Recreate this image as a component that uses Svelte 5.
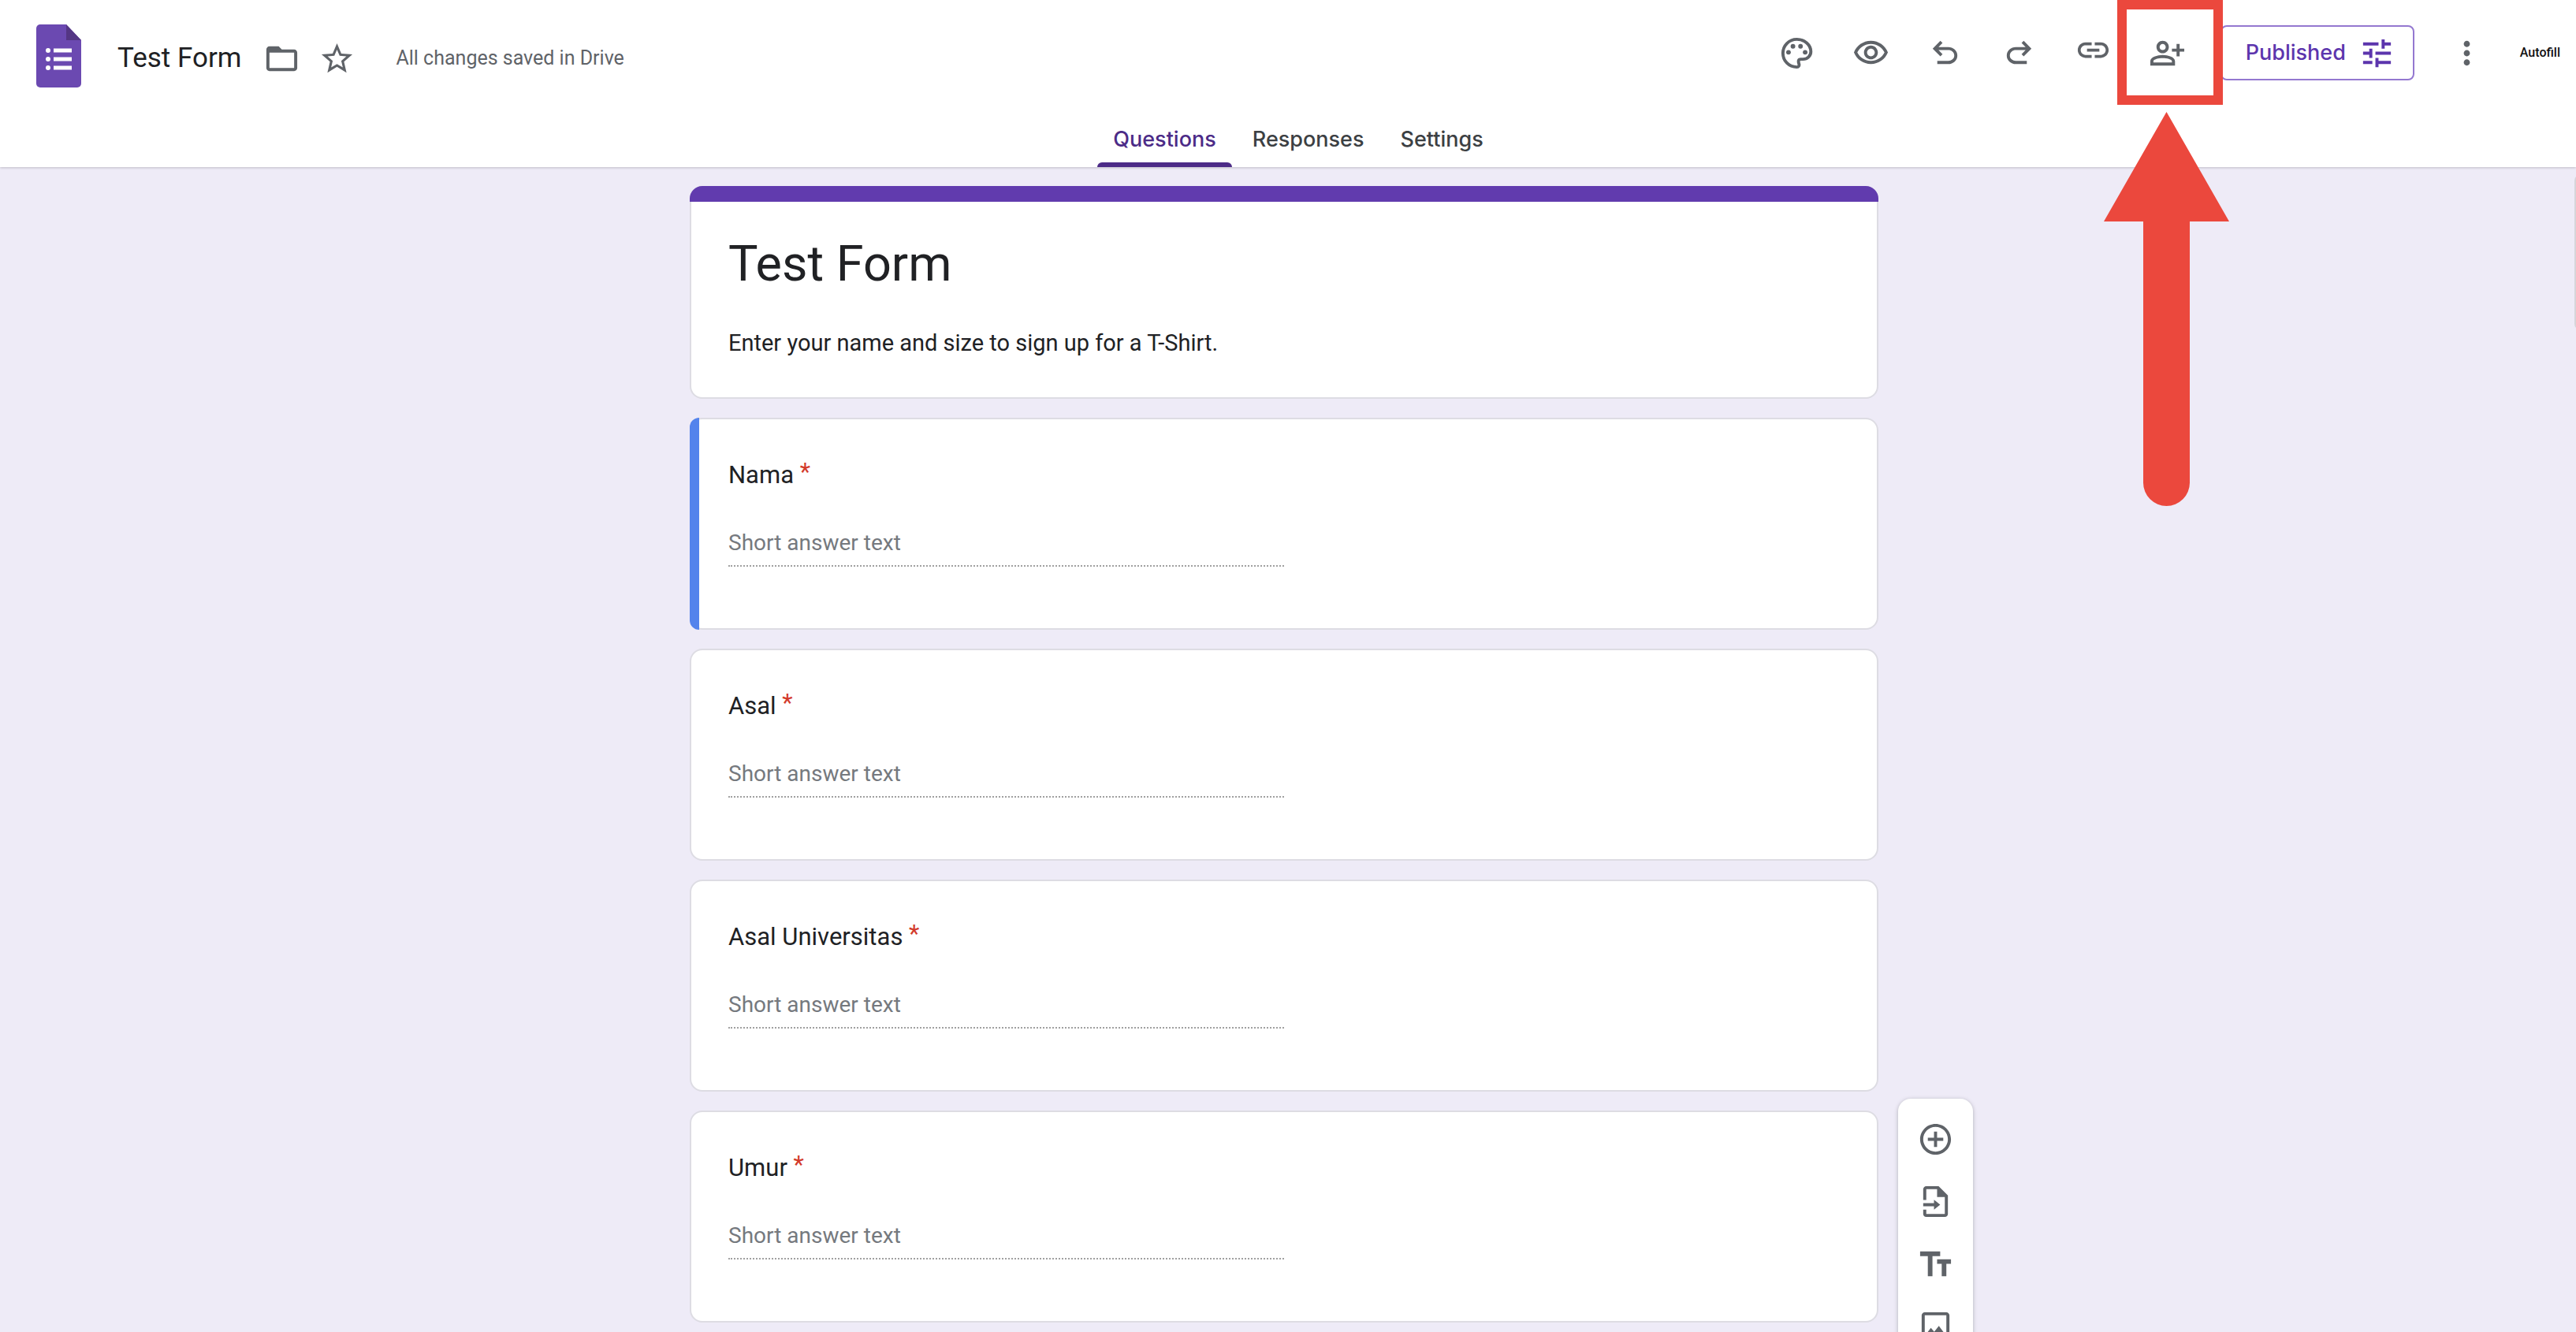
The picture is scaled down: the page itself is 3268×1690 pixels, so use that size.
<script>
  const questions = [
    { id: 'nama', label: 'Nama' },
    { id: 'asal', label: 'Asal' },
    { id: 'universitas', label: 'Asal Universitas' },
    { id: 'umur', label: 'Umur' }
  ];
  const tabs = ['Questions', 'Responses', 'Settings'];
  let current = $state('Questions');
  let selected = $state('nama');

  const undoPath =
    'M7 19v-2h7.100c1.050 0 1.960-.33 2.740-1 .77-.67 1.160-1.500 1.160-2.500s-.39-1.830-1.160-2.500c-.78-.67-1.690-1-2.740-1H7.800l2.600 2.600L9 14 4 9l5-5 1.400 1.400L7.800 8h6.300c1.620 0 3 .53 4.160 1.580C19.420 10.630 20 11.930 20 13.500s-.58 2.880-1.740 3.930C17.100 18.480 15.720 19 14.100 19H7z';

  const tools = [
    {
      label: 'Add question',
      d: 'M13 7h-2v4H7v2h4v4h2v-4h4v-2h-4V7zm-1-5C6.480 2 2 6.480 2 12s4.480 10 10 10 10-4.480 10-10S17.520 2 12 2zm0 18c-4.410 0-8-3.590-8-8s3.590-8 8-8 8 3.590 8 8-3.590 8-8 8z'
    },
    {
      label: 'Import questions',
      d: 'M14 2H6c-1.100 0-2 .9-2 2v7h2V4h7v5h5v11H6v-2.800H4V20c0 1.100.9 2 2 2h12c1.100 0 2-.9 2-2V8l-6-6zM4 13v2h7v2.200l4-3.200-4-3.200V13H4z'
    },
    { label: 'Add title and description', d: 'M2 4v3h5v13h3V7h5V4H2zm20 5h-9v3h3v8h3v-8h3V9z' },
    {
      label: 'Add image',
      d: 'M19 5v14H5V5h14m0-2H5c-1.100 0-2 .9-2 2v14c0 1.100.9 2 2 2h14c1.100 0 2-.9 2-2V5c0-1.100-.9-2-2-2zm-4.860 8.860l-3 3.870L9 13.140 6 17h12l-3.860-5.140z'
    }
  ];
</script>

<div class="page">
  <header class="top">
    <div class="bar">
      <div class="doc">
        <a class="logo" href="#home" aria-label="Forms home">
          <svg viewBox="0 0 57 80">
            <path fill="#6b49b1" d="M5 0h33l19 20v55a5 5 0 0 1-5 5H5a5 5 0 0 1-5-5V5a5 5 0 0 1 5-5z" />
            <path fill="#543684" d="M38 0l19 20H38z" />
            <g fill="#fff">
              <circle cx="15" cy="33" r="3" /><circle cx="15" cy="44" r="3" /><circle cx="15" cy="55" r="3" />
              <path d="M22 30.500h23v5H22zM22 41.500h23v5H22zM22 52.500h23v5H22z" />
            </g>
          </svg>
        </a>
        <h1>Test Form</h1>
        <button class="icon small" aria-label="Move to folder">
          <svg viewBox="0 0 24 24"><path d="M20 6h-8l-2-2H4c-1.100 0-1.990.9-1.990 2L2 18c0 1.100.9 2 2 2h16c1.100 0 2-.9 2-2V8c0-1.100-.9-2-2-2zm0 12H4V8h16v10z" /></svg>
        </button>
        <button class="icon small" aria-label="Star">
          <svg viewBox="0 0 24 24"><path d="M22 9.240l-7.190-.62L12 2 9.190 8.630 2 9.240l5.460 4.730L5.820 21 12 17.270 18.180 21l-1.630-7.030L22 9.240zM12 15.400l-3.760 2.270 1-4.280-3.320-2.880 4.380-.38L12 6.100l1.710 4.040 4.380.38-3.320 2.880 1 4.280L12 15.400z" /></svg>
        </button>
        <p class="status">All changes saved in Drive</p>
      </div>

      <div class="actions">
        <button class="icon" aria-label="Customize theme">
          <svg viewBox="0 0 24 24">
            <path fill="none" stroke="currentColor" stroke-width="2" d="M12 3C6.900 3 3 7 3 12s3.900 9 9 9c1.300 0 1.700-1 1.400-2.100-.5-1.500-.6-3 1.200-3H16c2.800 0 5.100-2.100 5.100-4.900C21.100 6.500 17 3 12 3z" />
            <circle cx="6.600" cy="11.400" r="1.500" /><circle cx="9.500" cy="7.500" r="1.500" />
            <circle cx="14.400" cy="7.500" r="1.500" /><circle cx="17.400" cy="11.400" r="1.500" />
          </svg>
        </button>
        <button class="icon" aria-label="Preview">
          <svg viewBox="0 0 24 24"><path d="M12 6c3.790 0 7.170 2.130 8.820 5.500C19.170 14.870 15.790 17 12 17s-7.170-2.130-8.820-5.500C4.830 8.130 8.210 6 12 6m0-2C7 4 2.730 7.110 1 11.500 2.730 15.890 7 19 12 19s9.270-3.110 11-7.500C21.270 7.110 17 4 12 4zm0 5c1.380 0 2.500 1.120 2.500 2.500S13.380 14 12 14s-2.500-1.120-2.500-2.500S10.620 9 12 9m0-2c-2.480 0-4.500 2.020-4.500 4.500S9.520 16 12 16s4.500-2.020 4.500-4.500S14.480 7 12 7z" /></svg>
        </button>
        <button class="icon" aria-label="Undo"><svg viewBox="0 0 24 24"><path d={undoPath} /></svg></button>
        <button class="icon" aria-label="Redo">
          <svg viewBox="0 0 24 24"><g transform="matrix(-1 0 0 1 24 0)"><path d={undoPath} /></g></svg>
        </button>
        <button class="icon" aria-label="Copy responder link">
          <svg viewBox="0 2 24 24"><path d="M3.900 12c0-1.710 1.390-3.100 3.100-3.100h4V7H7c-2.760 0-5 2.240-5 5s2.240 5 5 5h4v-1.900H7c-1.710 0-3.100-1.390-3.100-3.100zM8 13h8v-2H8v2zm9-6h-4v1.900h4c1.710 0 3.100 1.390 3.100 3.100s-1.390 3.100-3.100 3.100h-4V17h4c2.760 0 5-2.240 5-5s-2.240-5-5-5z" /></svg>
        </button>
        <div class="share">
          <button class="icon" aria-label="Add collaborators">
            <svg viewBox="0 0 24 24"><path d="M13 8c0-2.210-1.790-4-4-4S5 5.790 5 8s1.790 4 4 4 4-1.790 4-4zm-2 0c0 1.100-.9 2-2 2s-2-.9-2-2 .9-2 2-2 2 .9 2 2zM1 20v-2.800C1 14.600 5.500 13.200 9 13.200s8 1.400 8 4V20H1zm2-2h12v-.8c0-1.200-3.300-2-6-2s-6 .8-6 2v.8zM20 14v-3h3V9h-3V6h-2v3h-3v2h3v3h2z" /></svg>
          </button>
          <div class="highlight"></div>
          <svg class="arrow" viewBox="0 0 159 500" aria-hidden="true">
            <path d="M79.500 0L159 139h-50v331.500a29.500 29.500 0 0 1-59 0V139H0z" />
          </svg>
        </div>
        <button class="published">
          Published
          <svg viewBox="0 0 24 24"><path d="M3 17v2h6v-2H3zM3 5v2h10V5H3zm10 16v-2h8v-2h-8v-2h-2v6h2zM7 9v2H3v2h4v2h2V9H7zm14 4v-2H11v2h10zm-6-4h2V7h4V5h-4V3h-2v6z" /></svg>
        </button>
        <button class="icon" aria-label="More">
          <svg viewBox="0 0 24 24"><path d="M12 8c1.100 0 2-.9 2-2s-.9-2-2-2-2 .9-2 2 .9 2 2 2zm0 2c-1.100 0-2 .9-2 2s.9 2 2 2 2-.9 2-2-.9-2-2-2zm0 6c-1.100 0-2 .9-2 2s.9 2 2 2 2-.9 2-2-.9-2-2-2z" /></svg>
        </button>
        <button class="autofill">Autofill</button>
      </div>
    </div>

    <nav>
      {#each tabs as tab}
        <button class="tab" class:on={tab === current} onclick={() => (current = tab)}>{tab}</button>
      {/each}
    </nav>
  </header>

  <main>
    <div class="column">
      <section class="card intro">
        <h2>Test Form</h2>
        <p>Enter your name and size to sign up for a T-Shirt.</p>
      </section>

      {#each questions as q (q.id)}
        <section class="card question" class:selected={q.id === selected}>
          <label for={q.id}>{q.label} <span class="star">*</span></label>
          <input id={q.id} type="text" placeholder="Short answer text" onfocus={() => (selected = q.id)} />
        </section>
      {/each}

      <div class="tools" role="toolbar" aria-label="Form elements">
        {#each tools as tool}
          <button class="icon" aria-label={tool.label}><svg viewBox="0 0 24 24"><path d={tool.d} /></svg></button>
        {/each}
      </div>
    </div>
    <div class="thumb"></div>
  </main>
</div>

<style>
  :global(body) {
    margin: 0;
    font-family: Roboto, 'Liberation Sans', sans-serif;
    color: #202124;
  }
  .page {
    display: flex;
    flex-direction: column;
    height: 100vh;
    overflow: hidden;
  }
  h1, h2, p { margin: 0; font-weight: 400; }
  button {
    padding: 0;
    border: 0;
    background: none;
    color: #5f6368;
    cursor: pointer;
  }
  svg { display: block; fill: currentColor; }

  /* header */
  .top {
    position: relative;
    z-index: 1;
    background: #fff;
    box-shadow: 0 1px 3px rgba(0, 0, 0, 0.2);
  }
  .bar {
    display: flex;
    justify-content: space-between;
    height: 134px;
    padding: 0 20px 0 46px;
  }
  .doc, .actions { display: flex; align-items: center; }
  .doc { padding-top: 14px; }
  .logo { margin-bottom: 6px; }
  .logo svg { width: 57px; height: 80px; }
  h1 { margin: 0 16px 0 46px; font-size: 35px; line-height: 48px; white-space: nowrap; }
  .status { margin-left: 40px; font-size: 25px; line-height: 36px; color: #5f6368; white-space: nowrap; }
  .icon {
    display: flex;
    align-items: center;
    justify-content: center;
    width: 94px;
    height: 94px;
  }
  .icon.small { width: 70px; height: 70px; }
  .icon svg, .published svg { width: 47px; height: 47px; }
  .share {
    position: relative;
    display: flex;
    align-items: center;
    height: 100%;
  }
  .highlight {
    position: absolute;
    z-index: 2;
    top: 0;
    left: -17px;
    box-sizing: border-box;
    width: 134px;
    height: 133px;
    border: 12px solid #eb483d;
    pointer-events: none;
  }
  .arrow {
    position: absolute;
    z-index: 2;
    top: 142px;
    left: -34px;
    width: 159px;
    height: 500px;
    color: #eb483d;
    pointer-events: none;
  }
  .published {
    display: flex;
    align-items: center;
    gap: 16px;
    box-sizing: border-box;
    height: 70px;
    margin: 0 20px;
    padding: 0 22px 0 30px;
    border: 2px solid #9478d0;
    border-radius: 8px;
    color: #5c35ad;
    font: 500 27px/40px Inter, sans-serif;
  }
  .autofill {
    margin-left: 20px;
    color: #111;
    font: 500 16px/24px Roboto, sans-serif;
  }
  nav {
    display: flex;
    justify-content: center;
    gap: 6px;
    padding-left: 26px;
  }
  .tab {
    position: relative;
    height: 78px;
    padding: 8px 20px 0;
    color: #3c4043;
    font: 500 27px/40px Inter, sans-serif;
  }
  .tab.on { color: #4c2b87; }
  .tab.on::after {
    content: '';
    position: absolute;
    right: 0;
    bottom: 0;
    left: 0;
    height: 6px;
    border-radius: 6px 6px 0 0;
    background: #4c2b87;
  }

  /* form */
  main {
    position: relative;
    flex: 1;
    padding: 24px 10px 0 0;
    background: #eeebf7;
  }
  .column {
    position: relative;
    display: flex;
    flex-direction: column;
    gap: 24px;
    max-width: 1508px;
    margin: 0 auto;
  }
  .card {
    position: relative;
    border: 2px solid #dddce3;
    border-radius: 16px;
    background: #fff;
  }
  .intro { padding: 57px 47px 49px; }
  .intro::before {
    content: '';
    position: absolute;
    top: -2px;
    left: -2px;
    right: -2px;
    height: 20px;
    border-radius: 16px 16px 0 0;
    background: #613bae;
  }
  h2 { font-size: 63px; line-height: 80px; }
  .intro p { margin-top: 40px; font-size: 29px; line-height: 40px; }
  .question {
    display: flex;
    flex-direction: column;
    padding: 49px 47px 78px;
  }
  .selected::before {
    content: '';
    position: absolute;
    top: -2px;
    bottom: -2px;
    left: -2px;
    width: 12px;
    border-radius: 16px 0 0 16px;
    background: #5383ec;
  }
  label { font-size: 31px; line-height: 44px; }
  .star { color: #d33b2c; vertical-align: 4px; line-height: 1; }
  input {
    box-sizing: border-box;
    width: 50%;
    height: 60px;
    margin-top: 34px;
    padding: 0;
    border: 0;
    border-bottom: 2px dotted #a0a0a0;
    outline: 0;
    background: none;
    color: #202124;
    font: 28px Roboto, sans-serif;
  }
  input::placeholder { color: #75797e; opacity: 1; }

  .tools {
    position: absolute;
    top: 1158px;
    left: calc(100% + 25px);
    display: flex;
    flex-direction: column;
    width: 95px;
    padding: 12px 0;
    border-radius: 16px;
    background: #fff;
    box-shadow: 0 1px 5px rgba(60, 64, 67, 0.35);
  }
  .tools .icon { height: 79px; }
  .thumb {
    position: absolute;
    top: 10px;
    right: -12px;
    width: 14px;
    height: 196px;
    border-radius: 7px;
    background: #d6d5da;
  }
</style>
